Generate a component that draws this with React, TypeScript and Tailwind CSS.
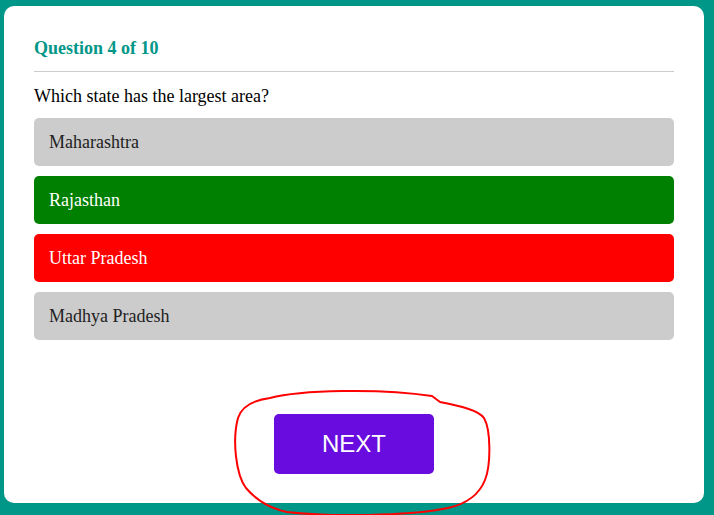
const options = [
    { label: 'Maharashtra', state: 'idle' },
    { label: 'Rajasthan', state: 'correct' },
    { label: 'Uttar Pradesh', state: 'wrong' },
    { label: 'Madhya Pradesh', state: 'idle' },
];

const optionClass = (state: string) => {
    if (state === 'correct') return 'bg-[#008000] text-white';
    if (state === 'wrong') return 'bg-[#ff0000] text-white';
    return 'bg-[#cccccc] text-[#222222]';
};

const App = () => {
    return (
        <div className="relative min-h-screen bg-[#009688] pt-[6px] pl-[4px] font-['Liberation_Serif',serif]">
            <div className="w-[700px] bg-white rounded-[10px] px-[30px] pt-[30px] pb-[29px]">
                {/* Header */}
                <div className="pb-[11px] border-b border-[#cccccc]">
                    <h2 className="text-[18px] leading-[24px] font-bold text-[#009688]">Question 4 of 10</h2>
                </div>

                <p className="mt-[12px] text-[18px] leading-[24px] text-black">Which state has the largest area?</p>

                {/* Options */}
                <div className="mt-[10px] flex flex-col gap-[10px]">
                    {options.map((opt) => (
                        <div
                            key={opt.label}
                            className={`h-[48px] flex items-center px-[15px] rounded-[5px] text-[18px] ${optionClass(opt.state)}`}
                        >
                            {opt.label}
                        </div>
                    ))}
                </div>

                <div className="mt-[74px] flex justify-center">
                    <button className="w-[160px] h-[60px] rounded-[5px] bg-[#690ce0] text-white text-[24px] font-['Liberation_Sans',sans-serif]">
                        NEXT
                    </button>
                </div>
            </div>

            {/* hand-drawn annotation */}
            <svg className="absolute top-0 left-0 pointer-events-none" width="714" height="515" viewBox="0 0 714 515">
                <path
                    d="M 270 398 C 300 390, 380 388, 432 396 L 440 402 C 460 406, 478 410, 484 418 C 491 430, 491 465, 485 480 C 479 495, 466 504, 448 508 C 410 516, 330 517, 287 512 C 268 508, 256 500, 246 488 C 236 475, 232 440, 238 418 C 242 405, 255 400, 270 398 Z"
                    fill="none"
                    stroke="#ff0000"
                    strokeWidth="2"
                    strokeLinejoin="round"
                />
            </svg>
        </div>
    );
};

export default App;
